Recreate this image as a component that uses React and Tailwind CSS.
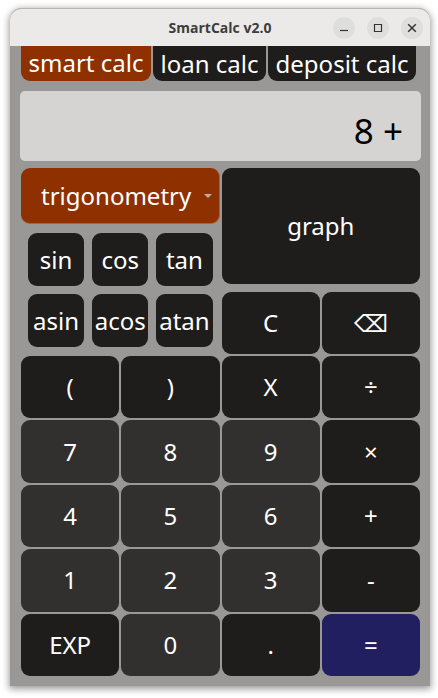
import React, { useState } from "react";

const keys = [
  ["(", "dark"], [")", "dark"], ["X", "dark"], ["÷", "dark"],
  ["7", "num"], ["8", "num"], ["9", "num"], ["×", "dark"],
  ["4", "num"], ["5", "num"], ["6", "num"], ["+", "dark"],
  ["1", "num"], ["2", "num"], ["3", "num"], ["-", "dark"],
  ["EXP", "dark"], ["0", "num"], [".", "dark"], ["=", "equals"],
];

const tones = {
  dark: "bg-[#1e1d1b]",
  num: "bg-[#32302e]",
  equals: "bg-[#211f60]",
};

function Key({ tone = "dark", className = "", children, ...rest }) {
  return (
    <button
      type="button"
      className={`flex min-w-0 items-center justify-center rounded-[9px] text-white ${tones[tone]} ${className}`}
      {...rest}
    >
      {children}
    </button>
  );
}

function WindowButton({ label, children }) {
  return (
    <button
      type="button"
      aria-label={label}
      className="flex size-[22px] items-center justify-center rounded-full bg-[#dededd]"
    >
      <svg viewBox="0 0 12 12" className="size-3" fill="none" stroke="#333" strokeWidth="1.2">
        {children}
      </svg>
    </button>
  );
}

function TitleBar() {
  return (
    <header className="grid h-[38px] grid-cols-[1fr_auto_1fr] items-center rounded-t-xl border-t border-[#b5b5b4] bg-[#ebeae9] px-[7px]">
      <span />
      <h1 className="font-['Open_Sans','Noto_Sans',sans-serif] text-sm font-bold text-[#3d3d3d]">
        SmartCalc v2.0
      </h1>
      <div className="flex justify-end gap-3">
        <WindowButton label="Minimize">
          <path d="M2 8.5H10" />
        </WindowButton>
        <WindowButton label="Maximize">
          <path d="M2.5 2.5H9.5V9.5H2.5Z" />
        </WindowButton>
        <WindowButton label="Close">
          <path d="M2.2 2.2L9.8 9.8M9.8 2.2L2.2 9.8" strokeWidth="1.5" />
        </WindowButton>
      </div>
    </header>
  );
}

export default function App() {
  const [group, setGroup] = useState("trigonometry");

  return (
    <div className="flex min-h-screen flex-col bg-white pt-2 pr-2 pb-3 pl-[10px] font-['Noto_Sans','DejaVu_Sans',sans-serif] text-2xl leading-8 text-white">
      <main className="flex flex-1 flex-col rounded-t-xl bg-[#999896] shadow-[0_2px_7px_1px_rgba(0,0,0,0.4)]">
        <TitleBar />
        <div className="flex flex-1 flex-col pr-[10px] pb-[10px] pl-[11px]">
          <nav className="flex gap-[2px]">
            <button type="button" className="h-[35px] w-[130px] rounded-b-[9px] bg-[#8f3000] pb-[2px] whitespace-nowrap">
              smart calc
            </button>
            <button type="button" className="h-[35px] w-[113px] rounded-b-[9px] bg-[#1e1d1b] whitespace-nowrap">
              loan calc
            </button>
            <button type="button" className="h-[35px] w-[148px] rounded-b-[9px] bg-[#1e1d1b] whitespace-nowrap">
              deposit calc
            </button>
          </nav>

          <div className="-mx-px mt-[10px] flex">
            <input
              aria-label="Expression"
              readOnly
              value="8 +"
              className="h-[70px] w-full min-w-0 rounded-[5px] bg-[#d5d4d2] pt-2 pr-[18px] text-right text-[35px] text-black outline-none"
            />
          </div>

          <div className="mt-[7px] grid grid-cols-2 gap-[2px]">
            <div className="flex flex-col">
              <div className="relative">
                <select
                  aria-label="Function group"
                  value={group}
                  onChange={(e) => setGroup(e.target.value)}
                  className="block h-14 w-full appearance-none rounded-[9px] border-r border-b border-[#b85f2c] bg-[#8f3000] pl-5 text-white outline-none"
                >
                  <option value="trigonometry">trigonometry</option>
                </select>
                <svg
                  viewBox="0 0 8 4"
                  className="pointer-events-none absolute top-[26px] right-2 h-1 w-2"
                  fill="#bcb0a9"
                >
                  <path d="M0 0H8L4 4Z" />
                </svg>
              </div>
              <div className="mt-[9px] grid grid-cols-3 gap-2 px-[7px]">
                {["sin", "cos", "tan", "asin", "acos", "atan"].map((name) => (
                  <Key key={name} className="h-[53px]">{name}</Key>
                ))}
              </div>
            </div>

            <div className="grid grid-cols-2 gap-x-[2px] gap-y-2">
              <Key className="col-span-2 h-[116px]">graph</Key>
              <Key className="h-[62px]">C</Key>
              <Key className="h-[62px]" aria-label="Backspace">⌫</Key>
            </div>
          </div>

          <div className="mt-[2px] grid flex-1 auto-rows-fr grid-cols-4 gap-[2px]">
            {keys.map(([label, tone]) => (
              <Key key={label} tone={tone}>{label}</Key>
            ))}
          </div>
        </div>
      </main>
    </div>
  );
}
